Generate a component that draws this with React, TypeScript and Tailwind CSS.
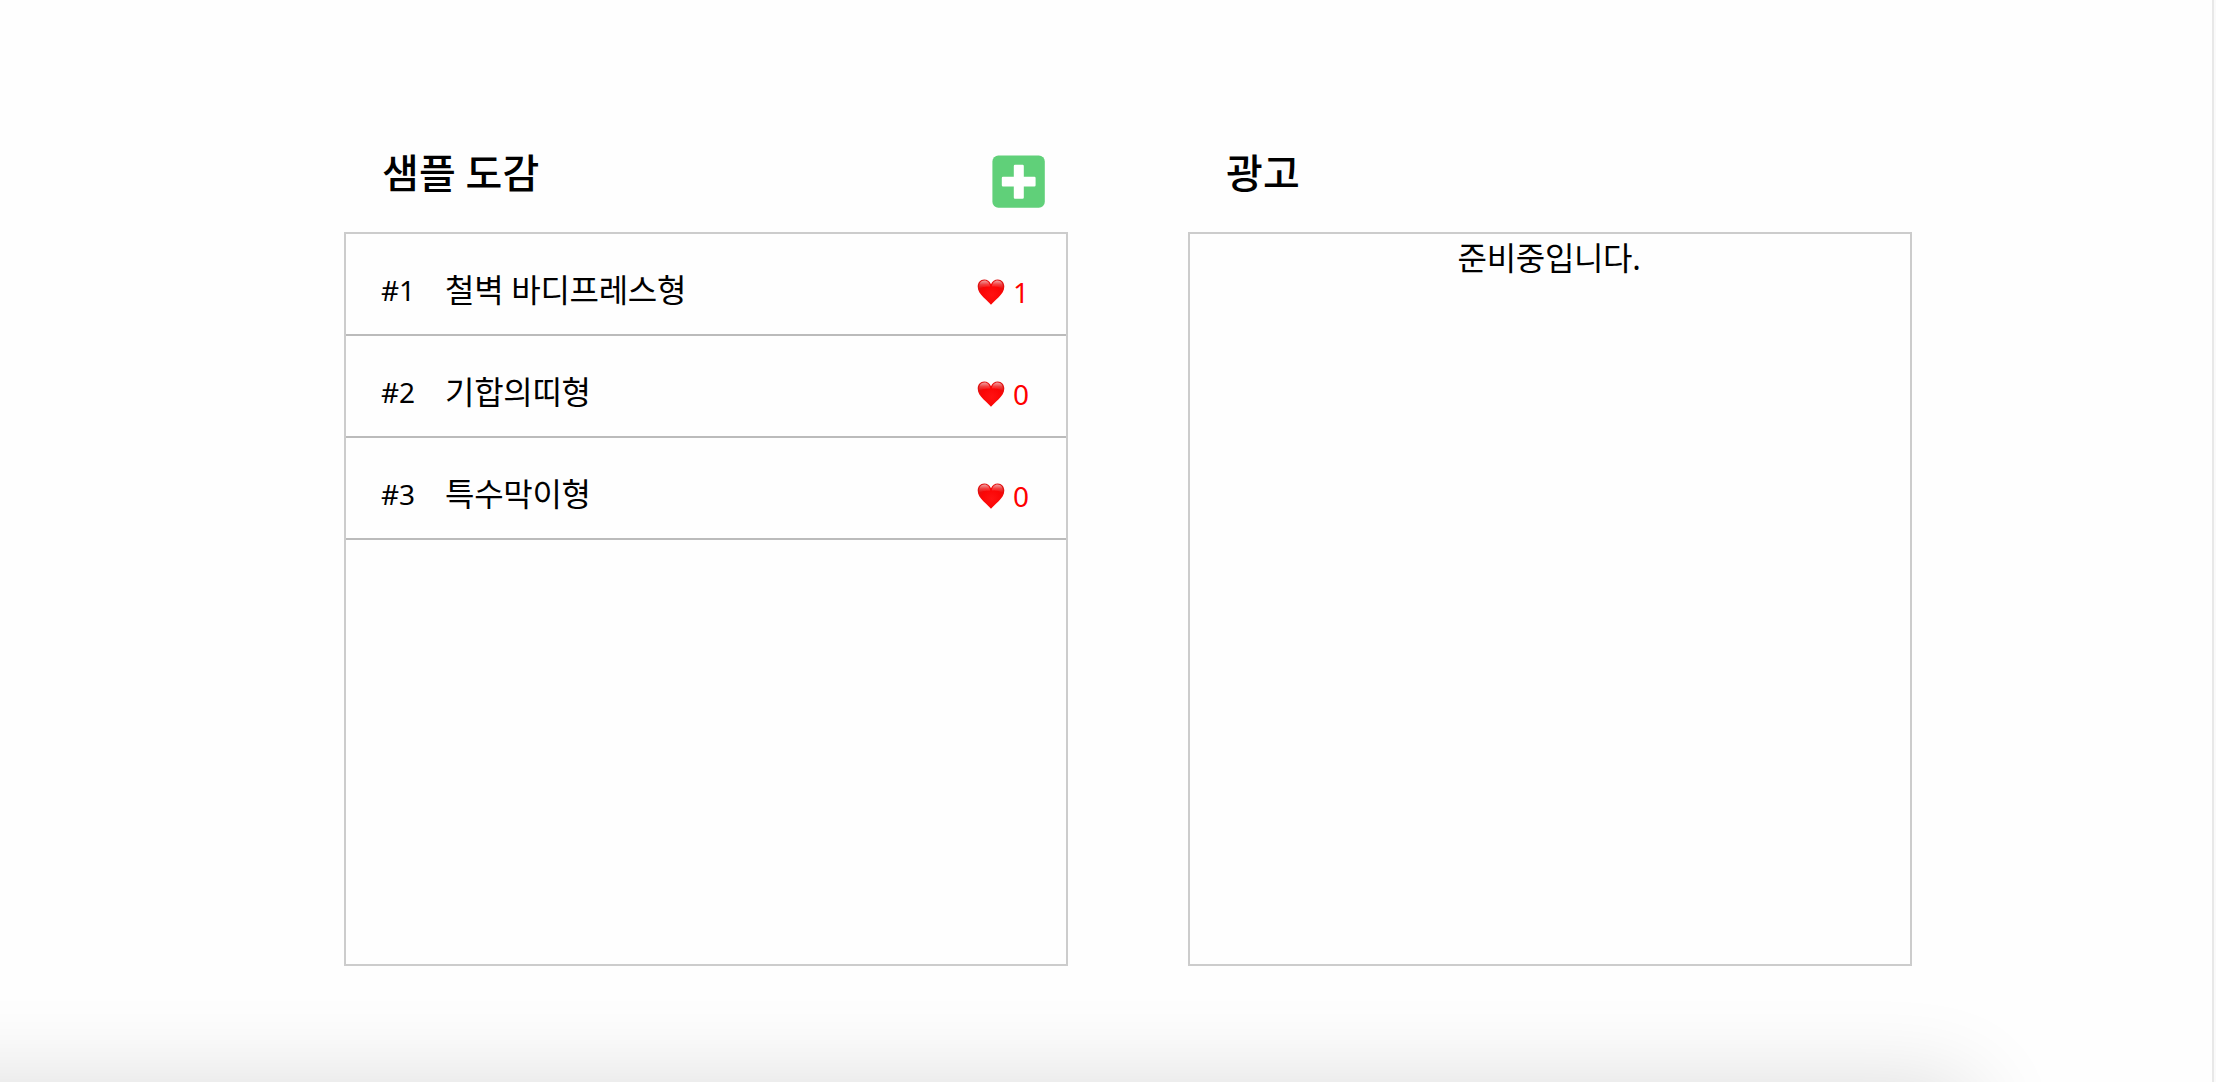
import React from 'react';

interface Sample {
  id: number;
  name: string;
  likes: number;
}

interface PanelProps {
  title: string;
  action?: React.ReactNode;
  children: React.ReactNode;
}

const samples: Sample[] = [
  { id: 1, name: '철벽 바디프레스형', likes: 1 },
  { id: 2, name: '기합의띠형', likes: 0 },
  { id: 3, name: '특수막이형', likes: 0 },
];

const Heart: React.FC = () => (
  <svg className="w-7 h-[26px]" viewBox="0 0 28 26">
    <defs>
      <radialGradient id="heartFill" cx="0.52" cy="0.6" r="0.6">
        <stop offset="0" stopColor="#ff1212" />
        <stop offset="0.6" stopColor="#fb0606" />
        <stop offset="1" stopColor="#e01212" />
      </radialGradient>
      <linearGradient id="heartShine" x1="0" y1="0" x2="0" y2="1">
        <stop offset="0" stopColor="#fff" stopOpacity="0.6" />
        <stop offset="0.5" stopColor="#fff" stopOpacity="0.22" />
        <stop offset="1" stopColor="#fff" stopOpacity="0" />
      </linearGradient>
    </defs>
    <path
      d="M14 25.8C12.4 23.8 9.6 21.4 6.6 18.5C3 15 .7 11.6 .7 7.6C.7 3.5 3.4 .6 7.2 .6C10.2 .6 12.8 2.3 14 5.2C15.2 2.3 17.8 .6 20.8 .6C24.6 .6 27.3 3.5 27.3 7.6C27.3 11.6 25 15 21.4 18.5C18.4 21.4 15.6 23.8 14 25.8Z"
      fill="url(#heartFill)"
    />
    <path d="M2.2 9.5C1.6 4.4 3.8 1.5 7.4 1.5C10.6 1.5 12.6 3.8 13.2 7.4C10 8 6 7.2 2.2 9.5Z" fill="url(#heartShine)" />
    <path d="M25.8 9.5C26.4 4.4 24.2 1.5 20.6 1.5C17.4 1.5 15.4 3.8 14.8 7.4C18 8 22 7.2 25.8 9.5Z" fill="url(#heartShine)" />
  </svg>
);

const AddButton: React.FC = () => (
  <button className="mt-[3px] w-[53px] h-[53px]">
    <svg viewBox="0 0 53 53" className="w-full h-full">
      <rect x="0.4" y="0.4" width="52.4" height="52.4" rx="6" fill="#60d079" />
      <path
        d="M23 9.8h7.6a1.2 1.2 0 0 1 1.2 1.2v10.8h10.6a1.2 1.2 0 0 1 1.2 1.2v7.2a1.2 1.2 0 0 1-1.2 1.2H31.8v11.2a1.2 1.2 0 0 1-1.2 1.2H23a1.2 1.2 0 0 1-1.2-1.2V31.4H11a1.2 1.2 0 0 1-1.2-1.2V23a1.2 1.2 0 0 1 1.2-1.2h10.8V11a1.2 1.2 0 0 1 1.2-1.2z"
        fill="#fff"
      />
    </svg>
  </button>
);

const Panel: React.FC<PanelProps> = ({ title, action, children }) => (
  <section className="w-[724px]">
    <div className="h-20 flex justify-between items-start pl-[38px] pr-[23.5px]">
      <h2 className="-mt-px text-[40px] leading-[44px] tracking-[0.3px] [word-spacing:-1.5px] font-medium">{title}</h2>
      {action}
    </div>
    <div className="h-[734px] border-2 border-[#cccccc]">{children}</div>
  </section>
);

const App: React.FC = () => {
  return (
    <div className="relative h-[1082px] w-full overflow-hidden bg-[#fefefe] text-black font-['Noto_Sans','Noto_Sans_CJK_KR',sans-serif]">
      <main className="flex gap-[120px] pl-[344px] pt-[152px]">
        <Panel title="샘플 도감" action={<AddButton />}>
          <ul>
            {samples.map((s) => (
              <li key={s.id} className="h-[102px] flex items-center border-b-2 border-[#bbbbbb] pl-[35px] pr-[37px] pt-3">
                <span className="w-16 pb-px text-[28px]">#{s.id}</span>
                <span className="flex-1 text-[32px] tracking-[-0.3px]">{s.name}</span>
                <span className="flex items-center gap-2 pt-[3px] text-[28px] text-[#ff0000]">
                  <Heart />
                  {s.likes}
                </span>
              </li>
            ))}
          </ul>
        </Panel>
        <Panel title="광고">
          <p className="pr-0.5 text-center text-[32px] leading-[48px] tracking-[-0.35px]">준비중입니다.</p>
        </Panel>
      </main>

      {/* soft shadow rising from the bottom edge */}
      <div className="absolute -left-60 top-[1083px] h-60 w-[2213px] rounded-[20px] shadow-[0_0_90px_rgba(0,0,0,0.14)]"></div>

      {/* scrollbar gutter */}
      <div className="absolute right-0 top-0 h-full w-1 border-l-2 border-[#e8e8e8] bg-[#fafafa]"></div>
    </div>
  );
};

export default App;
